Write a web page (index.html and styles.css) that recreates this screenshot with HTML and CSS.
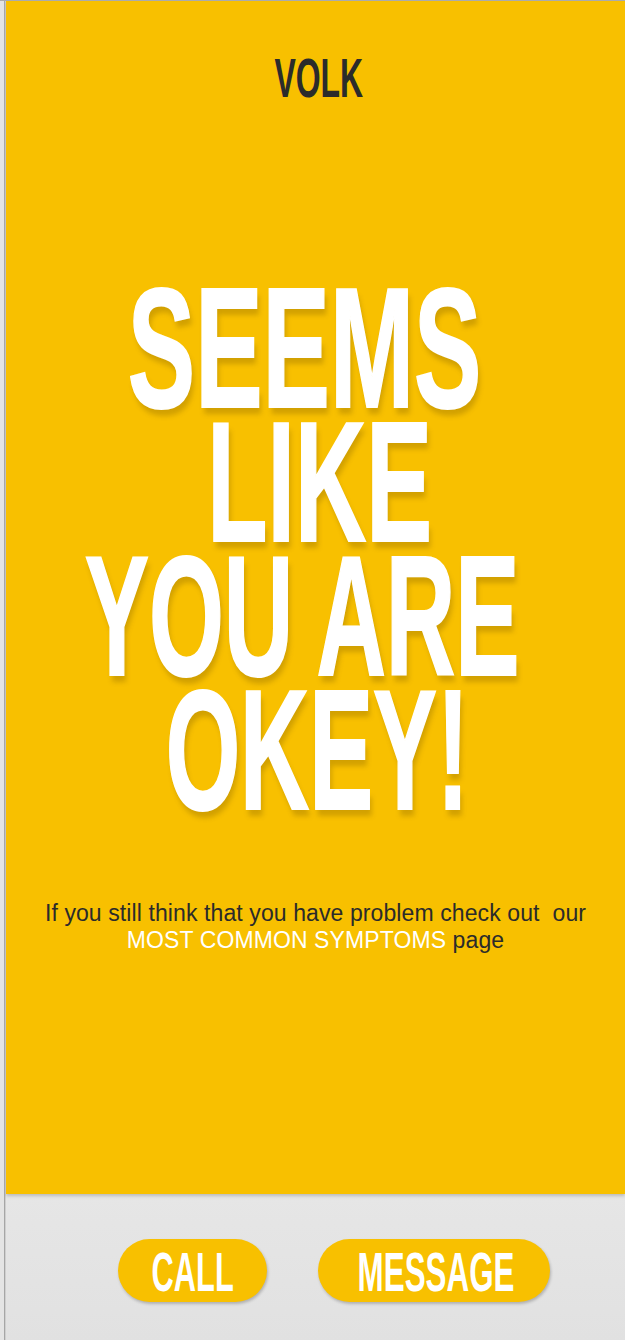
FILE: index.html
```html
<!DOCTYPE html>
<html lang="en">
<head>
<meta charset="utf-8">
<title>VOLK</title>
<link rel="stylesheet" href="styles.css">
</head>
<body>
<div class="frame">
  <main class="hero">
    <div class="brand"><span class="squeeze">VOLK</span></div>
    <h1 class="headline">
      <span class="line"><span class="word w1">SEEMS</span></span>
      <span class="line"><span class="word w2">LIKE</span></span>
      <span class="line"><span class="word w3">YOU ARE</span></span>
      <span class="line"><span class="word w4">OKEY!</span></span>
    </h1>
    <p class="note">If you still think that you have problem check out&nbsp; our<br><a class="link" href="#">MOST COMMON SYMPTOMS</a> page</p>
  </main>
  <footer class="actions">
    <a class="btn btn-call" href="#"><span class="btn-label">CALL</span></a>
    <a class="btn btn-msg" href="#"><span class="btn-label">MESSAGE</span></a>
  </footer>
</div>
</body>
</html>
```
FILE: styles.css
```css
html, body {
  margin: 0;
  padding: 0;
  background: #e4e4e4;
}
body {
  border-top: 1px solid #ababab;
  font-family: "Liberation Sans", Arial, sans-serif;
}
.frame {
  margin-left: 4px;
  border-left: 1px solid #a6a6a6;
  box-shadow: inset 1px 0 0 #cfcfcf;
  padding-left: 1px;
  height: 1339px;
  display: flex;
  flex-direction: column;
  overflow: hidden;
}
.hero {
  position: relative;
  z-index: 1;
  height: 1193px;
  background: #f8c000;
  box-shadow: 0 2px 3px rgba(0, 0, 0, 0.18);
  padding-top: 49px;
  box-sizing: border-box;
  display: flex;
  flex-direction: column;
  align-items: center;
}
.brand {
  font-weight: 700;
  font-size: 56px;
  line-height: 56px;
  color: #2b2b2b;
  text-align: center;
  width: 100%;
}
.squeeze {
  display: inline-block;
  transform: translateX(3px) scaleX(0.57);
}
.headline {
  margin: 175px 0 0;
  width: 100%;
  font-size: 170px;
  line-height: 134px;
  font-weight: 700;
  color: #ffffff;
  text-align: center;
  display: flex;
  flex-direction: column;
  align-items: center;
}
.line {
  display: block;
  height: 134px;
  white-space: nowrap;
}
.word {
  display: inline-block;
  text-shadow: 4px 7px 7px rgba(110, 80, 0, 0.28);
  -webkit-text-stroke: 2px #ffffff;
}
.w1 { transform: translateX(-11px) scaleX(0.594); }
.w2 { transform: translateX(4px) scaleX(0.58); }
.w3 { transform: translateX(-13px) scaleX(0.566); }
.w4 { transform: translateX(2px) scaleX(0.563); }
.note {
  margin: 83px 0 0;
  font-size: 23px;
  line-height: 27px;
  letter-spacing: 0.1px;
  color: #2b2b2b;
  text-align: center;
  width: 100%;
}
.link {
  color: #ffffff;
  text-decoration: none;
}
.actions {
  flex: 1;
  background: linear-gradient(#e6e6e6, #e1e1e1);
  display: flex;
  align-items: flex-start;
  padding: 45px 0 0 112px;
  gap: 51px;
}
.btn {
  height: 63px;
  border-radius: 32px;
  background: #f8c000;
  box-shadow: 1px 2px 3px rgba(0, 0, 0, 0.22);
  display: flex;
  align-items: center;
  justify-content: center;
  color: #ffffff;
  text-decoration: none;
  font-weight: 700;
  font-size: 56px;
  line-height: 56px;
  white-space: nowrap;
}
.btn-call { width: 149px; }
.btn-msg { width: 232px; }
.btn-label {
  display: inline-block;
  transform: translateY(1px) scaleX(0.55);
}
.btn-msg .btn-label { transform: translate(2px, 1px) scaleX(0.56); }
```
